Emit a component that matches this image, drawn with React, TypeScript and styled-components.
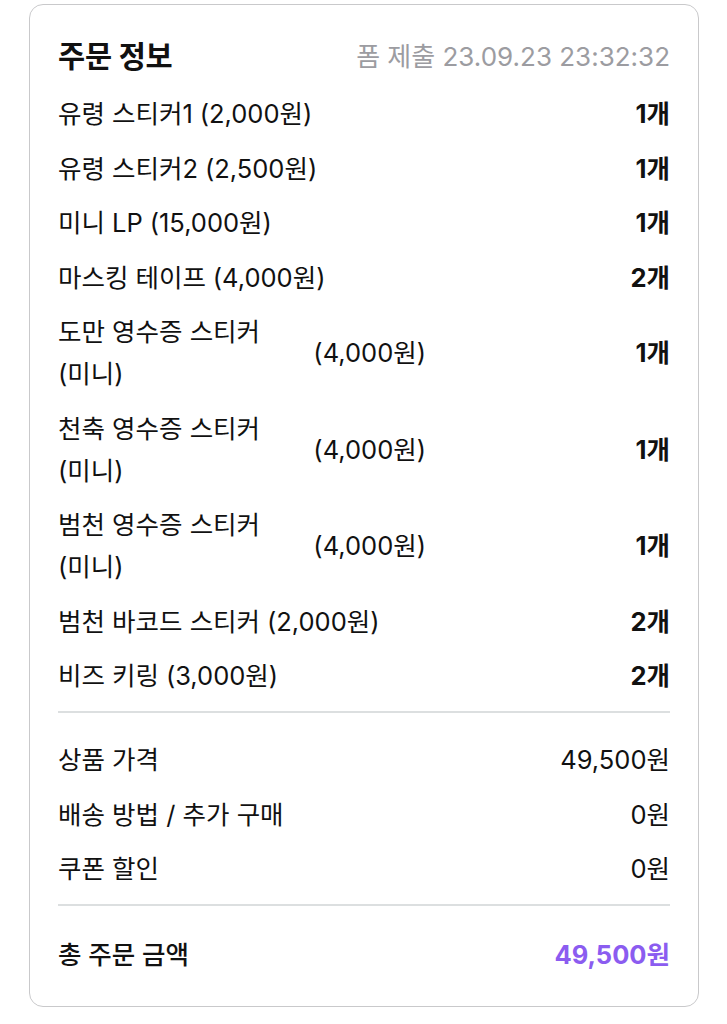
import React from "react";
import styled, { createGlobalStyle } from "styled-components";

const GlobalStyle = createGlobalStyle`
  html, body {
    margin: 0;
    padding: 0;
    background: #ffffff;
  }
  body {
    font-family: "Inter", "Noto Sans CJK KR", "Noto Sans", sans-serif;
    color: #111111;
    -webkit-font-smoothing: antialiased;
  }
`;

const Page = styled.div`
  padding: 4px 28px 18px 29px;
`;

const Card = styled.section`
  box-sizing: border-box;
  width: 670px;
  border: 1.5px solid #c9c9cb;
  border-radius: 14px;
  padding: 28px 28px 30px 28px;
  display: flex;
  flex-direction: column;
  background: #ffffff;
`;

const Header = styled.header`
  display: flex;
  justify-content: space-between;
  align-items: center;
  height: 42px;
  margin-bottom: 18px;
`;

const Title = styled.h2`
  margin: 0;
  font-size: 29.5px;
  font-weight: 700;
  color: #111111;
  letter-spacing: -0.2px;
`;

const Submitted = styled.span`
  font-size: 26px;
  color: #9c9ca1;
  font-weight: 400;
`;

const List = styled.div`
  display: flex;
  flex-direction: column;
  gap: 12.5px;
`;

const Row = styled.div`
  display: flex;
  justify-content: space-between;
  align-items: center;
  font-size: 25.5px;
  line-height: 42px;
`;

const ItemLabel = styled.div`
  display: flex;
  align-items: center;
  gap: 0.27em;
  max-width: 368px;
`;

const ItemName = styled.span`
  flex: 0 1 auto;
  word-break: keep-all;
`;

const ItemPrice = styled.span`
  flex: 0 0 auto;
  white-space: nowrap;
`;

const Qty = styled.span`
  font-weight: 700;
  white-space: nowrap;
`;

const Label = styled.span<{ $strong?: boolean }>`
  font-weight: ${(p) => (p.$strong ? 500 : 400)};
`;

const Value = styled.span<{ $accent?: boolean }>`
  white-space: nowrap;
  font-weight: ${(p) => (p.$accent ? 700 : 400)};
  color: ${(p) => (p.$accent ? "#8b5cf0" : "#111111")};
`;

const Divider = styled.hr<{ $tight?: boolean }>`
  border: none;
  height: 1.5px;
  background: #dcdfe0;
  margin: ${(p) => (p.$tight ? "14px 0 26.5px 0" : "14px 0 28px 0")};
`;

type Item = { name: string; price: string; qty: string };

const items: Item[] = [
  { name: "유령 스티커1", price: "(2,000원)", qty: "1개" },
  { name: "유령 스티커2", price: "(2,500원)", qty: "1개" },
  { name: "미니 LP", price: "(15,000원)", qty: "1개" },
  { name: "마스킹 테이프", price: "(4,000원)", qty: "2개" },
  { name: "도만 영수증 스티커 (미니)", price: "(4,000원)", qty: "1개" },
  { name: "천축 영수증 스티커 (미니)", price: "(4,000원)", qty: "1개" },
  { name: "범천 영수증 스티커 (미니)", price: "(4,000원)", qty: "1개" },
  { name: "범천 바코드 스티커", price: "(2,000원)", qty: "2개" },
  { name: "비즈 키링", price: "(3,000원)", qty: "2개" },
];

const summary = [
  { label: "상품 가격", value: "49,500원" },
  { label: "배송 방법 / 추가 구매", value: "0원" },
  { label: "쿠폰 할인", value: "0원" },
];

export default function App() {
  return (
    <>
      <GlobalStyle />
      <Page>
        <Card>
          <Header>
            <Title>주문 정보</Title>
            <Submitted>폼 제출 23.09.23 23:32:32</Submitted>
          </Header>
          <List>
            {items.map((it, i) => (
              <Row key={i}>
                <ItemLabel>
                  <ItemName>{it.name}</ItemName>
                  <ItemPrice>{it.price}</ItemPrice>
                </ItemLabel>
                <Qty>{it.qty}</Qty>
              </Row>
            ))}
          </List>
          <Divider $tight />
          <List>
            {summary.map((s, i) => (
              <Row key={i}>
                <Label>{s.label}</Label>
                <Value>{s.value}</Value>
              </Row>
            ))}
          </List>
          <Divider />
          <Row>
            <Label $strong>총 주문 금액</Label>
            <Value $accent>49,500원</Value>
          </Row>
        </Card>
      </Page>
    </>
  );
}
